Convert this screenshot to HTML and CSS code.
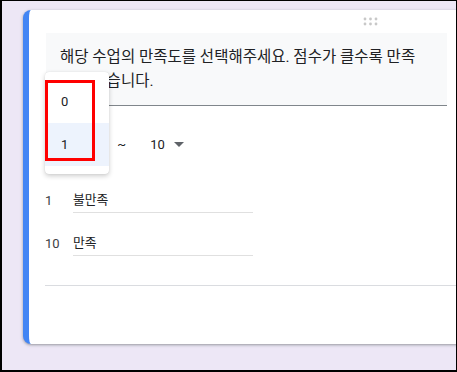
FILE: index.html
```html
<!DOCTYPE html>
<html lang="ko">
<head>
    <meta charset="UTF-8">
    <meta name="viewport" content="width=device-width, initial-scale=1.0">
    <title>선형 배율</title>
    <link rel="stylesheet" href="styles.css">
</head>
<body>

<div class="page">
    <div class="card">
        <!-- drag handle -->
        <div class="drag">
            <svg width="16" height="10" viewBox="0 0 16 10">
                <circle cx="2" cy="2" r="1.4"/>
                <circle cx="7.5" cy="2" r="1.4"/>
                <circle cx="13" cy="2" r="1.4"/>
                <circle cx="2" cy="7" r="1.4"/>
                <circle cx="7.5" cy="7" r="1.4"/>
                <circle cx="13" cy="7" r="1.4"/>
            </svg>
        </div>

        <div class="desc">해당 수업의 만족도를 선택해주세요. 점수가 클수록 만족도가 높습니다.</div>

        <!-- scale range -->
        <div class="range">
            <div class="select">
                <span>1</span>
                <svg class="caret" width="10" height="5" viewBox="0 0 10 5"><path d="M0 0h10L5 5z"/></svg>
            </div>
            <span class="tilde">~</span>
            <div class="select">
                <span>10</span>
                <svg class="caret" width="10" height="5" viewBox="0 0 10 5"><path d="M0 0h10L5 5z"/></svg>
            </div>
        </div>

        <div class="label-row">
            <span class="num">1</span>
            <div class="label-input">불만족</div>
        </div>
        <div class="label-row">
            <span class="num">10</span>
            <div class="label-input">만족</div>
        </div>

        <div class="divider"></div>

        <!-- open dropdown -->
        <ul class="menu">
            <li>0</li>
            <li class="active">1</li>
        </ul>
        <div class="mark"></div>
    </div>
</div>

</body>
</html>
```

FILE: styles.css
```css
html, body {
    margin: 0;
    padding: 0;
}
body {
    width: 454px;
    height: 369px;
    border-style: solid;
    border-color: #000;
    border-width: 1px 1px 2px 2px;
    background-color: #ede7f6;
    font-family: Roboto, "Noto Sans CJK KR", sans-serif;
    color: #202124;
}
.page {
    width: 433px;
    height: 360px;
    padding: 9px 0 0 21px;
    overflow: hidden;
}
.card {
    position: relative;
    width: 470px;
    height: 334px;
    box-sizing: border-box;
    padding-left: 16px;
    background-color: #fff;
    border-left: 6px solid #4285f4;
    border-radius: 8px;
    box-shadow: 0 1px 2px 0 rgba(60, 64, 67, 0.3), 0 1px 3px 1px rgba(60, 64, 67, 0.15);
}
.drag {
    height: 23px;
    display: flex;
    align-items: center;
    padding-left: 318px;
}
.drag svg {
    fill: #c8c8c8;
}
.desc {
    width: 367px;
    margin-left: 1px;
    padding: 12px 20px 12px 14px;
    background-color: #f8f9fa;
    border-bottom: 1px solid #80868b;
    font-size: 15.5px;
    line-height: 24px;
}
.range {
    display: flex;
    align-items: center;
    height: 24px;
    margin-top: 26px;
    font-size: 13px;
}
.select {
    display: flex;
    align-items: center;
    gap: 9px;
}
.caret {
    fill: #5f6368;
}
.tilde {
    margin: 0 24px 0 46px;
}
.label-row {
    display: flex;
    align-items: flex-end;
    margin-top: 32px;
    font-size: 13px;
}
.label-row + .label-row {
    margin-top: 18px;
}
.num {
    width: 28px;
    line-height: 24px;
    color: #3c4043;
}
.label-input {
    width: 180px;
    line-height: 24px;
    border-bottom: 1px solid #e0e0e0;
    font-size: 12.8px;
}
.divider {
    margin-top: 29px;
    border-top: 1px solid #dadce0;
}
.menu {
    position: absolute;
    left: 16px;
    top: 62px;
    width: 64px;
    margin: 0;
    padding: 8px 0;
    list-style: none;
    background-color: #fff;
    border-radius: 4px;
    box-shadow: 0 2px 5px rgba(0, 0, 0, 0.2), 0 0 1px rgba(0, 0, 0, 0.15);
    font-size: 13px;
}
.menu li {
    height: 43px;
    line-height: 43px;
    padding-left: 16px;
}
.menu li.active {
    background-color: #edf3fd;
}
.mark {
    position: absolute;
    left: 16px;
    top: 70px;
    width: 44px;
    height: 75px;
    border: 3px solid #f00;
}
```
